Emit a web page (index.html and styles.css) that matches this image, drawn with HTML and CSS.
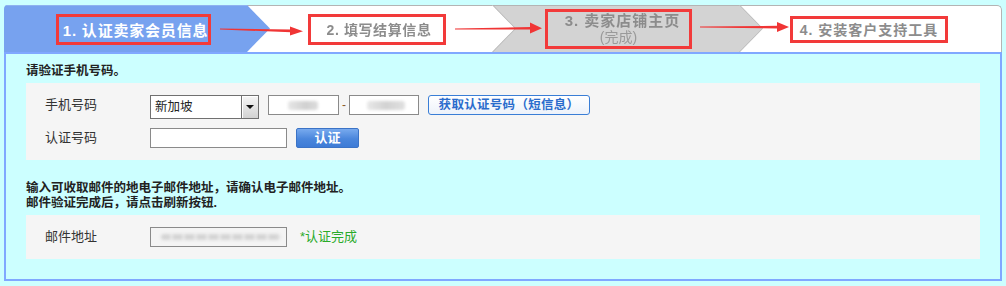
FILE: index.html
```html
<!DOCTYPE html>
<html lang="zh">
<head>
<meta charset="utf-8">
<title>认证卖家会员信息</title>
<link rel="stylesheet" href="styles.css">
</head>
<body>
<div class="page">
  <div class="tabs">
    <div class="step s1">
      <div class="shape"><span class="mark m1">1. 认证卖家会员信息</span></div>
    </div>
    <div class="step s2">
      <div class="shape"><span class="mark m2">2. 填写结算信息</span></div>
    </div>
    <div class="step s3">
      <div class="shape"><span class="mark m3"><span class="l1">3. 卖家店铺主页</span><span class="l2">(完成)</span></span></div>
    </div>
    <div class="step s4">
      <div class="shape"><span class="mark m4">4. 安装客户支持工具</span></div>
    </div>
    <svg class="arrow a1" width="84" height="14" viewBox="0 0 84 14"><polygon points="0,4.6 71,5.6 71,8.2 0,5.6" /><polygon points="70,2.5 83,7.2 70,11.5" /></svg>
    <svg class="arrow a2" width="88" height="14" viewBox="0 0 88 14"><polygon points="0,7.6 76,6 76,8.6 0,8.6" /><polygon points="75,1.5 87,7.2 75,12.5" /></svg>
    <svg class="arrow a3" width="90" height="14" viewBox="0 0 90 14"><polygon points="0,6.4 78,5.8 78,8.4 0,7.4" /><polygon points="77,2 89,7 77,12" /></svg>
  </div>
  <div class="panel">
    <p class="heading">请验证手机号码。</p>
    <div class="box">
      <div class="row row-top">
        <span class="label">手机号码</span>
        <div class="select"><span class="select-text">新加坡</span><span class="select-btn"><i class="tri"></i></span></div>
        <span class="input short"><i class="blur bl1"></i></span>
        <span class="dash">-</span>
        <span class="input short tight"><i class="blur bl2"></i></span>
        <span class="btn-outline">获取认证号码（短信息）</span>
      </div>
      <div class="row">
        <span class="label">认证号码</span>
        <span class="input long"></span>
        <span class="btn-blue">认证</span>
      </div>
    </div>
    <p class="note">输入可收取邮件的地电子邮件地址，请确认电子邮件地址。<br>邮件验证完成后，请点击刷新按钮.</p>
    <div class="box">
      <div class="row">
        <span class="label">邮件地址</span>
        <span class="input long mail"><i class="blur bl3"></i></span>
        <span class="ok">*认证完成</span>
      </div>
    </div>
  </div>
</div>
</body>
</html>
```
FILE: styles.css
```css
html, body {
  margin: 0;
  padding: 0;
}
body {
  background: #ccffff;
  font-family: "Liberation Sans", "Noto Sans CJK SC", sans-serif;
  color: #333;
}
.page {
  padding: 5px 4px 0 4px;
}

/* ---------- step tabs ---------- */
.tabs {
  position: relative;
  display: flex;
  height: 47px;
  border-radius: 4px 4px 0 0;
  overflow: hidden;
}
.step {
  height: 100%;
  position: relative;
  flex: none;
}
.shape {
  box-sizing: border-box;
  height: 100%;
  display: flex;
  align-items: center;
  border-top: 1px solid #b4b4b4;
}
.s1 { width: 266px; z-index: 4; }
.s2 { width: 268px; margin-left: -23px; z-index: 3; filter: drop-shadow(1px 0 0 #b0b0b0); }
.s3 { width: 269px; margin-left: -22px; z-index: 2; filter: drop-shadow(1px 0 0 #b8b8b8); }
.s4 { flex: 1; margin-left: -22px; z-index: 1; }

.s1 .shape, .s2 .shape, .s3 .shape {
  clip-path: polygon(0 0, calc(100% - 23px) 0, 100% 50%, calc(100% - 23px) 100%, 0 100%);
}
.s1 .shape { background: #77a2ef; padding-left: 52px; border-top-color: #8fb2f0; }
.s2 .shape { background: #ffffff; padding-left: 61px; }
.s3 .shape { background: #d3d3d3; padding-left: 52px; }
.s4 .shape {
  background: #ffffff;
  padding-left: 50px;
  border-right: 1px solid #b4b4b4;
  border-top-right-radius: 5px;
}

.mark {
  box-sizing: border-box;
  border: 3px solid #f23a3a;
  display: flex;
  flex-direction: column;
  align-items: center;
  justify-content: center;
  white-space: nowrap;
  font-weight: bold;
}
.m1 {
  width: 155px;
  height: 31px;
  color: #ffffff;
  font-size: 15px;
  letter-spacing: 0.8px;
  padding-left: 4px;
}
.m2 {
  width: 138px;
  height: 31px;
  color: #8c8c8c;
  font-size: 14px;
  letter-spacing: 0.6px;
  padding-left: 4px;
}
.m3 {
  width: 147px;
  height: 40px;
  color: #8c8c8c;
}
.m3 .l1 {
  font-size: 15px;
  line-height: 17px;
  letter-spacing: 1px;
  padding-left: 8px;
}
.m3 .l2 {
  font-size: 14px;
  line-height: 17px;
  font-weight: normal;
  color: #9a9a9a;
}
.m4 {
  width: 158px;
  height: 27px;
  color: #8c8c8c;
  font-size: 14px;
  letter-spacing: 1px;
}

.arrow {
  position: absolute;
  z-index: 10;
  fill: #f03535;
}
.a1 { left: 216px; top: 19px; }
.a2 { left: 451px; top: 16px; }
.a3 { left: 696px; top: 15px; }

/* ---------- panel ---------- */
.panel {
  border: 2px solid #80a8ff;
  padding: 9px 20px 20px 20px;
}
.heading {
  margin: 0 0 4px 0;
  font-size: 12.5px;
  line-height: 16px;
  font-weight: bold;
  color: #222;
}
.box {
  background: #f5f5f5;
  padding: 12px 19px;
  display: flex;
  flex-direction: column;
  gap: 9px;
}
.row {
  display: flex;
  align-items: center;
  height: 20px;
}
.row-top {
  align-items: flex-start;
  height: 24px;
}
.label {
  width: 105px;
  flex: none;
  font-size: 13px;
  line-height: 20px;
  color: #333;
}
.select {
  box-sizing: border-box;
  width: 109px;
  height: 24px;
  border: 1px solid #707070;
  background: #fff;
  display: flex;
}
.select-text {
  flex: 1;
  padding-left: 4px;
  font-size: 12.5px;
  line-height: 22px;
  color: #222;
}
.select-btn {
  width: 16px;
  border-left: 1px solid #707070;
  background: linear-gradient(#f6f6f6, #d2d2d2);
  box-shadow: inset 1px 1px 0 #ffffff;
  display: flex;
  align-items: center;
  justify-content: center;
}
.tri {
  width: 0;
  height: 0;
  border-left: 4px solid transparent;
  border-right: 4px solid transparent;
  border-top: 4px solid #111;
}
.input {
  box-sizing: border-box;
  height: 20px;
  border: 1px solid #8a8a8a;
  background: #fff;
  display: flex;
  align-items: center;
  flex: none;
}
.short { width: 71px; margin-left: 9px; }
.short.tight { width: 70px; margin-left: 0; }
.long { width: 137px; }
.mail { background: #f4f4f4; }
.dash {
  width: 10px;
  text-align: center;
  font-size: 12px;
  line-height: 20px;
  color: #8a5a2a;
}
.blur {
  display: block;
  height: 9px;
  border-radius: 3px;
  filter: blur(1.6px);
}
.bl1 { margin-left: 19px; width: 30px; background: linear-gradient(90deg, #e6e6e6, #d0d0d0 60%, #dcdcdc); }
.bl2 { margin-left: 17px; width: 38px; background: linear-gradient(90deg, #e8e8e8, #d2d2d2 50%, #e0e0e0); }
.bl3 {
  margin-left: 10px;
  width: 120px;
  height: 6px;
  background: repeating-linear-gradient(90deg, #d4d4d4 0 9px, #e6e6e6 9px 12px);
  filter: blur(1.4px);
}
.btn-outline {
  box-sizing: border-box;
  margin-left: 9px;
  width: 162px;
  height: 20px;
  border: 1px solid #3a7ed6;
  border-radius: 3px;
  background: linear-gradient(#ffffff, #edf2fa);
  color: #2a6ccc;
  font-size: 12.5px;
  font-weight: bold;
  line-height: 18px;
  text-align: center;
  letter-spacing: 0.3px;
}
.btn-blue {
  box-sizing: border-box;
  margin-left: 9px;
  width: 63px;
  height: 20px;
  border: 1px solid #3b73c6;
  border-radius: 2px;
  background: linear-gradient(#78aaee, #4a86dc 55%, #3e7bd6);
  color: #ffffff;
  font-size: 13px;
  font-weight: bold;
  line-height: 18px;
  text-align: center;
}
.note {
  margin: 21px 0 4px 0;
  font-size: 12.5px;
  line-height: 15px;
  font-weight: bold;
  color: #222;
}
.ok {
  margin-left: 13px;
  font-size: 13px;
  color: #2aab2a;
  line-height: 20px;
}
```
